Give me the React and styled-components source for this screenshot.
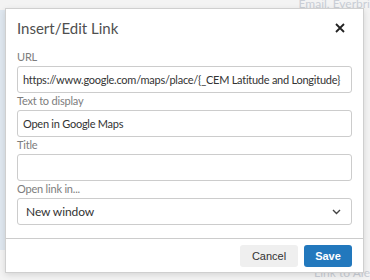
import React from "react";
import styled, { createGlobalStyle } from "styled-components";

const GlobalStyle = createGlobalStyle`
  html, body {
    margin: 0;
    padding: 0;
  }
  body {
    width: 370px;
    height: 280px;
    overflow: hidden;
    background: #f3f3f3;
    font-family: Lato, "Open Sans", sans-serif;
  }
`;

const Page = styled.div`
  position: relative;
  width: 370px;
  height: 280px;
  display: flex;
  overflow: hidden;
`;

const SideStrip = styled.div`
  width: 5px;
  margin-top: 10px;
  height: 240px;
  background: #dfe7ef;
`;

const Backdrop = styled.div`
  flex: 1;
  display: flex;
  flex-direction: column;
  justify-content: space-between;
  align-items: flex-end;
`;

const FadedText = styled.div`
  font-size: 12px;
  line-height: 14px;
  color: #c9ced6;
  white-space: nowrap;
  margin-top: ${(p) => p.top || 0}px;
`;

const Dialog = styled.div`
  position: absolute;
  left: 5px;
  top: 8px;
  width: 359px;
  height: 265px;
  box-sizing: border-box;
  background: #fff;
  border: 1px solid #cfcfcf;
  box-shadow: 0 2px 6px rgba(0, 0, 0, 0.12);
  display: flex;
  flex-direction: column;
`;

const Header = styled.div`
  height: 37px;
  display: flex;
  align-items: center;
  justify-content: space-between;
  padding: 0 18px 0 11px;
`;

const Title = styled.div`
  font-size: 15px;
  color: #4f4f4f;
`;

const CloseButton = styled.button`
  border: 0;
  background: none;
  padding: 0;
  display: flex;
  cursor: pointer;
`;

const Body = styled.div`
  flex: 1;
  padding: 3px 11px 0;
  display: flex;
  flex-direction: column;
`;

const Label = styled.div`
  font-size: 11px;
  letter-spacing: -0.2px;
  line-height: 15px;
  color: #7d7d7d;
  margin-bottom: 2px;
`;

const Input = styled.div`
  height: 27px;
  box-sizing: border-box;
  border: 1px solid #cccccc;
  border-radius: 3px;
  display: flex;
  align-items: center;
  justify-content: space-between;
  padding: 0 ${(p) => (p.select ? 10 : 4)}px 0 ${(p) => (p.select ? 8 : 5)}px;
  font-size: ${(p) => (p.select ? 12 : 11)}px;
  letter-spacing: ${(p) => (p.select ? -0.1 : -0.25)}px;
  color: #333;
  white-space: nowrap;
  overflow: hidden;
`;

const Footer = styled.div`
  border-top: 1px solid #cccccc;
  padding: 6px 11px 5px;
  display: flex;
  justify-content: flex-end;
  gap: 6px;
`;

const Button = styled.button`
  height: 22px;
  width: ${(p) => p.w}px;
  border: 0;
  border-radius: 3px;
  font-family: "Liberation Sans", Arial, sans-serif;
  font-size: 11px;
  font-weight: ${(p) => (p.primary ? 700 : 400)};
  background: ${(p) => (p.primary ? "#2278bd" : "#efefef")};
  color: ${(p) => (p.primary ? "#fff" : "#333")};
  padding: 0;
`;

const Chevron = () => (
  <svg width="9" height="6" viewBox="0 0 9 6">
    <path d="M1 1 L4.5 4.5 L8 1" fill="none" stroke="#444" strokeWidth="1.4" />
  </svg>
);

const CloseIcon = () => (
  <svg width="10" height="10" viewBox="0 0 10 10">
    <path d="M1 1 L9 9 M9 1 L1 9" stroke="#222" strokeWidth="1.8" />
  </svg>
);

const fields = [
  { label: "URL", value: "https://www.google.com/maps/place/{_CEM Latitude and Longitude}" },
  { label: "Text to display", value: "Open in Google Maps" },
  { label: "Title", value: "" },
];

export default function App() {
  return (
    <Page>
      <GlobalStyle />
      <SideStrip />
      <Backdrop>
        <FadedText top={-3}>Email, Everbri</FadedText>
        <FadedText>Link to Ale</FadedText>
      </Backdrop>
      <Dialog>
        <Header>
          <Title>Insert/Edit Link</Title>
          <CloseButton>
            <CloseIcon />
          </CloseButton>
        </Header>
        <Body>
          {fields.map((f) => (
            <div key={f.label}>
              <Label>{f.label}</Label>
              <Input>{f.value}</Input>
            </div>
          ))}
          <Label>Open link in...</Label>
          <Input select>
            New window
            <Chevron />
          </Input>
        </Body>
        <Footer>
          <Button w={58}>Cancel</Button>
          <Button primary w={48}>Save</Button>
        </Footer>
      </Dialog>
    </Page>
  );
}
